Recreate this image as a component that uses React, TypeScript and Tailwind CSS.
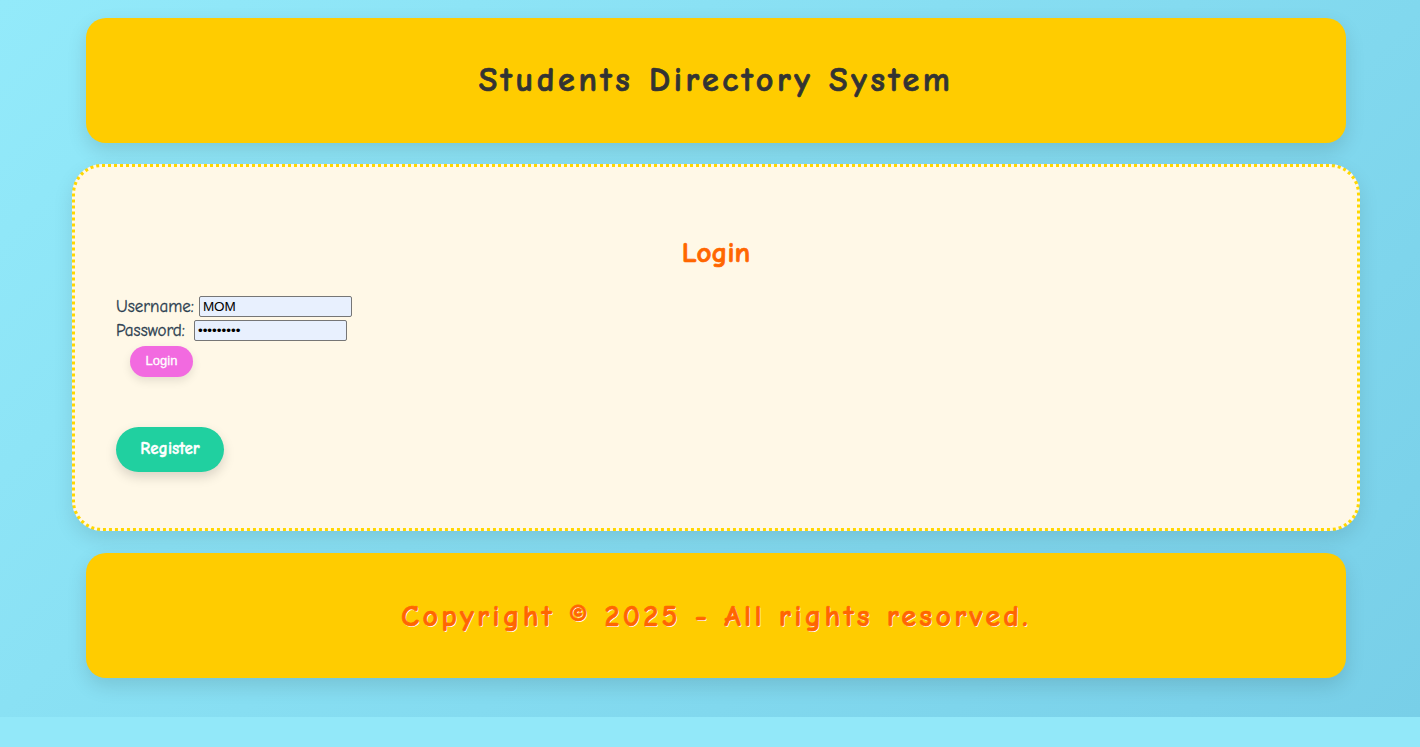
const comic = 'font-["Comic_Sans_MS","Comic_Neue","Noto_Sans",sans-serif]'
const boldish = '[-webkit-text-stroke:0.7px_currentColor]'

export default function App() {
  return (
    <div className="min-h-screen bg-[#92e8f9]">
      <div
        className={`${comic} h-[717px] bg-[linear-gradient(135deg,#93eafa_0%,#78cfe8_100%)] pl-[12px] pt-[18px]`}
      >
        <header className="mx-auto flex h-[125px] w-[1260px] items-center justify-center rounded-[20px] bg-[#ffcc00] shadow-[0_8px_20px_rgba(0,0,0,0.12)]">
          <h1 className={`text-[34px] font-bold tracking-[3.6px] text-[#333333] ${boldish}`}>
            Students Directory System
          </h1>
        </header>

        <main className="mx-auto mt-[21px] h-[367px] w-[1288px] rounded-[30px] border-[3px] border-dotted border-[#ffd700] bg-[#fff8e7] px-[41px] pt-[64px] shadow-[0_8px_20px_rgba(0,0,0,0.1)]">
          <h2 className={`text-center text-[29px] font-bold text-[#ff6600] ${boldish}`}>Login</h2>
          <form className="mt-[20px] text-[17px] text-[#2c3e50] [-webkit-text-stroke:0.3px_currentColor]">
            <div className="flex h-[24px] items-center gap-[5px]">
              <label htmlFor="username">Username:</label>
              <input
                id="username"
                defaultValue="MOM"
                className="h-[21px] w-[153px] rounded-[2px] border border-[#767676] bg-[#e8f0fe] px-[3px] font-['Liberation_Sans',sans-serif] text-[13.5px] text-black [-webkit-text-stroke:0]"
              />
            </div>
            <div className="flex h-[24px] items-center gap-[9px]">
              <label htmlFor="password">Password:</label>
              <input
                id="password"
                type="password"
                defaultValue="123456789"
                className="h-[21px] w-[153px] rounded-[2px] border border-[#767676] bg-[#e8f0fe] px-[3px] font-['Liberation_Sans',sans-serif] text-[13.5px] text-black [-webkit-text-stroke:0]"
              />
            </div>
            <button
              type="button"
              className="ml-[14px] mt-[3px] h-[31px] w-[63px] rounded-full bg-[#f26ae0] font-['Liberation_Sans',sans-serif] text-[13px] text-white shadow-[0_4px_10px_rgba(0,0,0,0.1)] [-webkit-text-stroke:0.3px_currentColor]"
            >
              Login
            </button>
          </form>
          <button
            type="button"
            className="mt-[50px] h-[45px] w-[108px] rounded-full bg-[#20d0a0] text-[17px] font-bold text-white shadow-[0_5px_12px_rgba(0,0,0,0.15)] [-webkit-text-stroke:0.4px_currentColor]"
          >
            Register
          </button>
        </main>

        <footer className="mx-auto mt-[22px] flex h-[125px] w-[1260px] items-center justify-center rounded-[20px] bg-[#ffcc00] shadow-[0_8px_20px_rgba(0,0,0,0.12)]">
          <p className={`pt-[2px] text-[30px] font-bold tracking-[3.3px] text-[#ff6600] [text-shadow:1px_1px_0_#ffffff] ${boldish}`}>
            Copyright © 2025 - All rights resorved.
          </p>
        </footer>
      </div>
    </div>
  )
}
